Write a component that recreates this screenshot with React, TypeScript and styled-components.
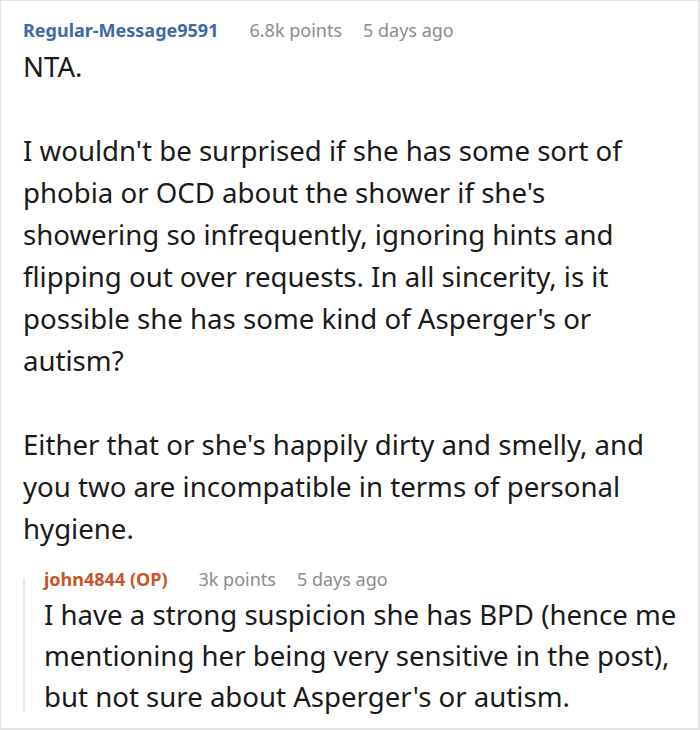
import React from 'react';
import styled, { createGlobalStyle } from 'styled-components';

const GlobalStyle = createGlobalStyle`
    html, body {
        margin: 0;
        padding: 0;
        background: #ffffff;
    }
    body {
        font-family: "Noto Sans", "Open Sans", sans-serif;
    }
`;

const Card = styled.div`
    box-sizing: border-box;
    width: 700px;
    height: 730px;
    border: 1px solid #e4e4e4;
    border-right-width: 2px;
    border-bottom-width: 2px;
    padding: 14px 10px 0 22px;
    overflow: hidden;
`;

const Meta = styled.div`
    display: flex;
    align-items: baseline;
    gap: 21px;
    font-size: 18px;
    line-height: 30px;
    color: #8c8c8c;
`;

const Author = styled.span<{ $op?: boolean }>`
    font-weight: 700;
    margin-right: 10px;
    color: ${p => (p.$op ? '#c8552a' : '#3c6aa6')};
`;

const Body = styled.div`
    font-size: 27.6px;
    line-height: 42px;
    color: #1a1a1a;

    p {
        margin: 0 0 42px 0;
    }
    p:last-child {
        margin-bottom: 0;
    }
`;

// thread line starts a bit below the reply header's top and stops short of the last line
const Reply = styled.div`
    margin-top: 15px;
    padding-left: 21px;
    background: linear-gradient(#e8e8e8, #e8e8e8) no-repeat left 0 top 14px / 2px calc(100% - 19px);
`;

const ReplyBody = styled(Body)`
    line-height: 41px;
`;

interface CommentMeta {
    author: string;
    points: string;
    age: string;
    op?: boolean;
}

const Header: React.FC<CommentMeta> = ({ author, points, age, op }) => (
    <Meta>
        <Author $op={op}>{author}</Author>
        <span>{points}</span>
        <span>{age}</span>
    </Meta>
);

const App: React.FC = () => {
    return (
        <>
            <GlobalStyle />
            <Card>
                <Header author="Regular-Message9591" points="6.8k points" age="5 days ago" />
                <Body>
                    <p>NTA.</p>
                    <p>
                        I wouldn't be surprised if she has some sort of phobia or OCD about the shower if she's
                        showering so infrequently, ignoring hints and flipping out over requests. In all sincerity,
                        is it possible she has some kind of Asperger's or autism?
                    </p>
                    <p>
                        Either that or she's happily dirty and smelly, and you two are incompatible in terms of
                        personal hygiene.
                    </p>
                </Body>
                <Reply>
                    <Header author="john4844 (OP)" points="3k points" age="5 days ago" op />
                    <ReplyBody>
                        <p>
                            I have a strong suspicion she has BPD (hence me mentioning her being very sensitive in
                            the post), but not sure about Asperger's or autism.
                        </p>
                    </ReplyBody>
                </Reply>
            </Card>
        </>
    );
};

export default App;
